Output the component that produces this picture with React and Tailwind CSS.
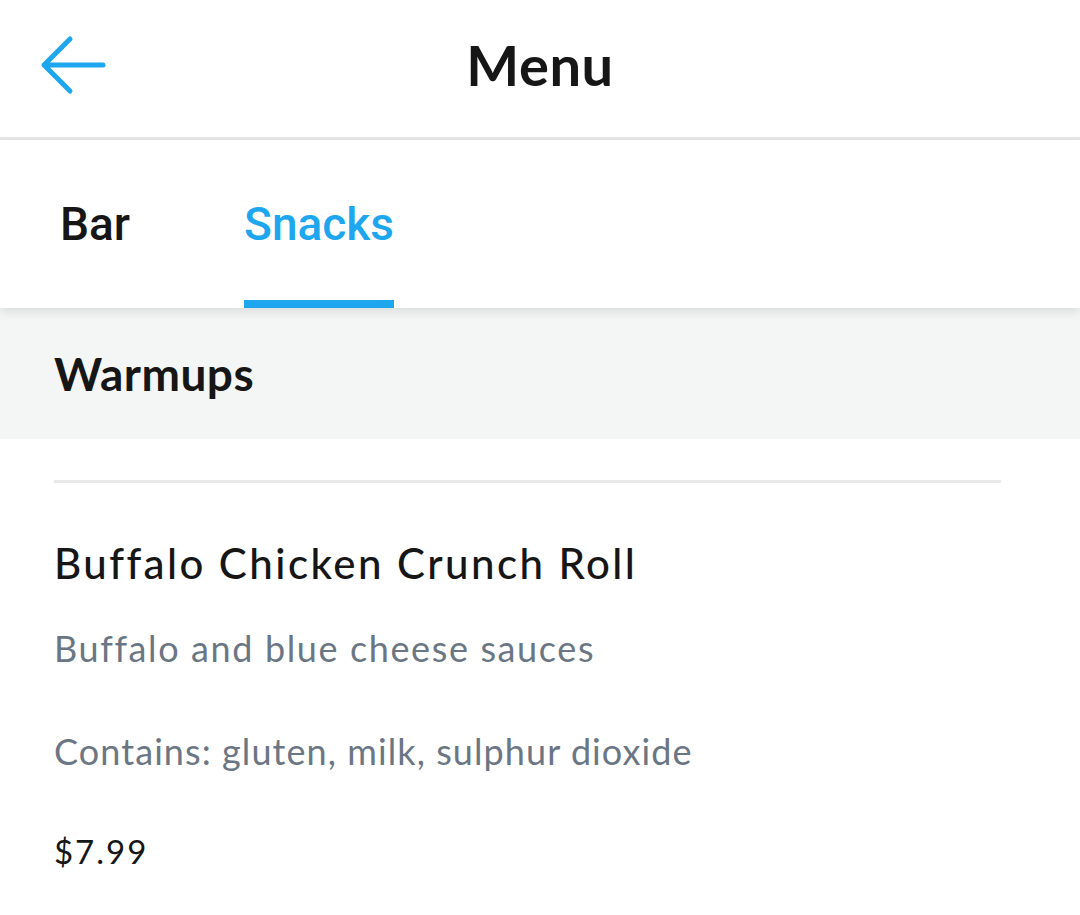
import React from "react";

const items = [
  {
    id: 1,
    name: "Buffalo Chicken Crunch Roll",
    description: "Buffalo and blue cheese sauces",
    allergens: "Contains: gluten, milk, sulphur dioxide",
    price: "$7.99",
  },
];

function BackArrow() {
  return (
    <svg width="66" height="60" viewBox="0 0 66 60" fill="none">
      <path
        d="M63 30H5M30 4L4 30l26 26"
        stroke="#1ea7ef"
        strokeWidth="5"
        strokeLinecap="round"
        strokeLinejoin="round"
      />
    </svg>
  );
}

export default function App() {
  const tabs = ["Bar", "Snacks"];
  const active = "Snacks";

  return (
    <div className="w-[1080px] min-h-[915px] bg-white font-['Lato',sans-serif] text-[#161616]">
      {/* Top bar */}
      <header className="h-[140px] border-b-[3px] border-[#e6e6e6] grid grid-cols-[1fr_auto_1fr] items-center pb-[8px]">
        <button className="pl-[40px] flex items-center">
          <BackArrow />
        </button>
        <h1 className="text-[56px] leading-none font-bold tracking-[0.01em]">Menu</h1>
        <div />
      </header>

      {/* Tabs */}
      <nav className="relative z-10 h-[168px] flex items-stretch gap-[114px] pl-[60px] bg-white shadow-[0_4px_10px_rgba(0,0,0,0.1)]">
        {tabs.map((t) => (
          <div key={t} className="relative flex items-center">
            <span
              className={
                "font-['Roboto',sans-serif] font-medium text-[46px] leading-none " +
                (t === active ? "text-[#1ea7ef]" : "text-[#161616]")
              }
            >
              {t}
            </span>
            {t === active && (
              <div className="absolute left-0 right-0 bottom-0 h-[8px] bg-[#1ea7ef]" />
            )}
          </div>
        ))}
      </nav>

      {/* Section header */}
      <div className="h-[131px] bg-[#f4f6f5] flex items-center pl-[54px]">
        <h2 className="text-[46px] leading-none font-bold tracking-[0.01em]">Warmups</h2>
      </div>

      {/* Items */}
      <div className="pl-[54px] pr-[79px]">
        {items.map((item) => (
          <div key={item.id}>
            <div className="mt-[41px] h-[3px] bg-[#e8e8e8]" />
            <h3 className="mt-[59px] text-[42px] leading-none font-medium tracking-[0.058em]">{item.name}</h3>
            <p className="mt-[46px] text-[36px] leading-none text-[#6b7684] tracking-[0.045em]">{item.description}</p>
            <p className="mt-[67px] text-[36px] leading-none text-[#6b7684] tracking-[0.03em]">{item.allergens}</p>
            <p className="mt-[66px] text-[33px] leading-none tracking-[0.06em]">{item.price}</p>
          </div>
        ))}
      </div>
    </div>
  );
}
